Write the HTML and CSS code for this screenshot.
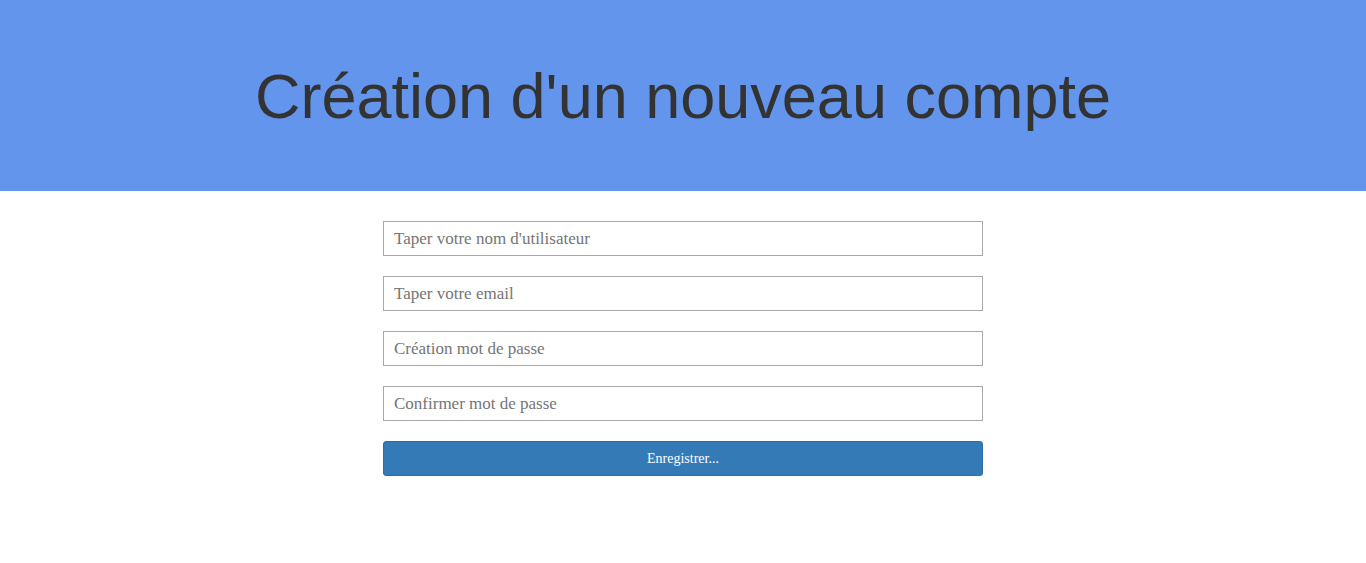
FILE: index.html
```html
<!DOCTYPE html>
<html lang="fr">
<head>
<meta charset="utf-8">
<title>Création d'un nouveau compte</title>
<link rel="stylesheet" href="styles.css">
</head>
<body>
<header class="banner">
  <h1 class="banner-title">Création d'un nouveau compte</h1>
</header>
<main class="content">
  <form class="signup">
    <input class="field" type="text" placeholder="Taper votre nom d'utilisateur">
    <input class="field" type="email" placeholder="Taper votre email">
    <input class="field" type="password" placeholder="Création mot de passe">
    <input class="field" type="password" placeholder="Confirmer mot de passe">
    <button class="submit" type="button">Enregistrer...</button>
  </form>
</main>
</body>
</html>
```

FILE: styles.css
```css
html, body {
  margin: 0;
  padding: 0;
  background: #fff;
}
body {
  font-family: "Liberation Serif", "Times New Roman", serif;
}
.banner {
  background: #6495ed;
  height: 191px;
  display: flex;
  align-items: center;
  justify-content: center;
}
.banner-title {
  margin: 0;
  font-family: "Liberation Sans", Arial, sans-serif;
  font-weight: normal;
  font-size: 63px;
  color: #333;
}
.content {
  display: flex;
  justify-content: center;
  padding-top: 30px;
}
.signup {
  width: 600px;
  display: flex;
  flex-direction: column;
  gap: 20px;
}
.field {
  box-sizing: border-box;
  height: 35px;
  width: 100%;
  margin: 0;
  border: 1px solid #a9a9a9;
  border-radius: 0;
  padding: 0 10px;
  font-family: "Liberation Serif", "Times New Roman", serif;
  font-size: 17px;
  color: #333;
  background: #fff;
  outline: none;
}
.field::placeholder {
  color: #757575;
}
.submit {
  box-sizing: border-box;
  height: 35px;
  width: 100%;
  margin: 0;
  border: 1px solid #2e6da4;
  border-radius: 3px;
  background: #337ab7;
  color: #fff;
  font-family: "Liberation Serif", "Times New Roman", serif;
  font-size: 14px;
  cursor: pointer;
}
```
